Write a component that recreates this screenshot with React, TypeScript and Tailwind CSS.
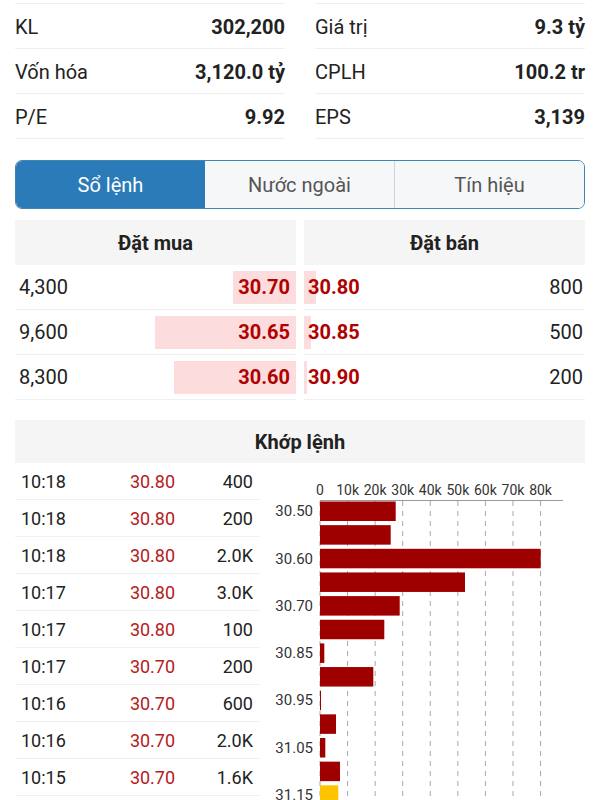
import React from "react";

const info = [
  [["KL", "302,200"], ["Vốn hóa", "3,120.0 tỷ"], ["P/E", "9.92"]],
  [["Giá trị", "9.3 tỷ"], ["CPLH", "100.2 tr"], ["EPS", "3,139"]],
];

const buys = [
  { vol: "4,300", price: "30.70", w: 63 },
  { vol: "9,600", price: "30.65", w: 141 },
  { vol: "8,300", price: "30.60", w: 122 },
];
const sells = [
  { vol: "800", price: "30.80", w: 12 },
  { vol: "500", price: "30.85", w: 7 },
  { vol: "200", price: "30.90", w: 3 },
];

const trades = [
  ["10:18", "30.80", "400"],
  ["10:18", "30.80", "200"],
  ["10:18", "30.80", "2.0K"],
  ["10:17", "30.80", "3.0K"],
  ["10:17", "30.80", "100"],
  ["10:17", "30.70", "200"],
  ["10:16", "30.70", "600"],
  ["10:16", "30.70", "2.0K"],
  ["10:15", "30.70", "1.6K"],
];

const bars = [75.7, 70.7, 220.7, 145, 79.7, 64.3, 4.3, 53.3, 1, 16, 5.3, 20, 18.3, 10];
const yLabels: Record<number, string> = {
  0: "30.50",
  2: "30.60",
  4: "30.70",
  6: "30.85",
  8: "30.95",
  10: "31.05",
  12: "31.15",
};
const xTicks = ["0", "10k", "20k", "30k", "40k", "50k", "60k", "70k", "80k"];

function Chart() {
  const x0 = 60;
  const step = 27.57;
  return (
    <svg width="325" height="337" viewBox="0 0 325 337" className="block" style={{ fontFamily: "Roboto, sans-serif" }}>
      {xTicks.map((t, k) => (
        <line
          key={"g" + k}
          x1={x0 + k * step}
          x2={x0 + k * step}
          y1={38}
          y2={337}
          stroke="#a8a8a8"
          strokeWidth="1"
          strokeDasharray="5 5"
        />
      ))}
      <line x1={x0} x2={303} y1={37.5} y2={37.5} stroke="#9a9a9a" strokeWidth="1" />
      {xTicks.map((t, k) => (
        <text key={"t" + k} x={x0 + k * step} y={32} fontSize="14" fill="#333" textAnchor="middle">
          {t}
        </text>
      ))}
      {bars.map((w, i) => (
        <rect
          key={"b" + i}
          x={x0}
          y={38.5 + i * 23.65}
          width={w}
          height={19.5}
          fill={i === 12 ? "#ffc400" : "#9e0000"}
        />
      ))}
      {Object.entries(yLabels).map(([i, l]) => (
        <text
          key={"y" + i}
          x={53}
          y={38.5 + Number(i) * 23.65 + 9.75}
          fontSize="15"
          fill="#333"
          textAnchor="end"
          dominantBaseline="central"
        >
          {l}
        </text>
      ))}
    </svg>
  );
}

export default function App() {
  return (
    <div
      className="w-[600px] h-[800px] overflow-hidden bg-white text-[#222]"
      style={{ fontFamily: "Roboto, 'Noto Sans', sans-serif" }}
    >
      {/* Info grid */}
      <div className="px-[15px] pt-[3px] grid grid-cols-2 gap-x-[30px]">
        {info.map((col, ci) => (
          <div key={ci} className="flex flex-col border-t border-[#efefef]">
            {col.map(([l, v]) => (
              <div key={l} className="h-[45px] flex items-center justify-between border-b border-[#efefef] text-[20px] pt-[1px]">
                <span className="text-[#222]">{l}</span>
                <span className="font-bold text-[#222]">{v}</span>
              </div>
            ))}
          </div>
        ))}
      </div>

      {/* Tabs */}
      <div className="mx-[15px] mt-[21px] h-[49px] flex border-[1.5px] border-[#3f86b3] rounded-[7px] overflow-hidden text-[20px]">
        <div className="flex-1 flex items-center justify-center bg-[#2b7bb9] text-white">Sổ lệnh</div>
        <div className="flex-1 flex items-center justify-center bg-[#f6f7f9] text-[#555]">Nước ngoài</div>
        <div className="flex-1 flex items-center justify-center bg-[#f6f7f9] text-[#555] border-l border-[#cfd3d6]">
          Tín hiệu
        </div>
      </div>

      {/* Order book */}
      <div className="mx-[15px] mt-[11px] flex gap-2 text-[20px]">
        <div className="flex-1 flex flex-col">
          <div className="h-[45px] bg-[#f5f5f5] flex items-center justify-center font-bold">Đặt mua</div>
          {buys.map((b) => (
            <div key={b.price} className="relative h-[45px] flex items-center justify-between border-b border-[#f0f0f0]">
              <div className="absolute right-0 top-[6px] h-[33px] bg-[#fcdcdc]" style={{ width: b.w }} />
              <span className="relative pl-[4px] text-[#222]">{b.vol}</span>
              <span className="relative pr-[6px] font-bold text-[#b00000]">{b.price}</span>
            </div>
          ))}
        </div>
        <div className="flex-1 flex flex-col">
          <div className="h-[45px] bg-[#f5f5f5] flex items-center justify-center font-bold">Đặt bán</div>
          {sells.map((s) => (
            <div key={s.price} className="relative h-[45px] flex items-center justify-between border-b border-[#f0f0f0]">
              <div className="absolute left-0 top-[6px] h-[33px] bg-[#fcdcdc]" style={{ width: s.w }} />
              <span className="relative pl-[4px] font-bold text-[#b00000]">{s.price}</span>
              <span className="relative pr-[2px] text-[#222]">{s.vol}</span>
            </div>
          ))}
        </div>
      </div>

      {/* Matched orders */}
      <div className="mx-[15px] mt-[20px]">
        <div className="h-[43px] bg-[#f5f5f5] flex items-center justify-center font-bold text-[20px]">Khớp lệnh</div>
        <div className="flex">
          <div className="w-[245px] flex flex-col text-[18px]">
            {trades.map(([t, p, v], i) => (
              <div key={i} className="h-[37px] grid grid-cols-[95px_85px_1fr] items-center border-b border-[#f0f0f0]">
                <span className="pl-[6px] text-[#222]">{t}</span>
                <span className="text-center text-[#b52020]">{p}</span>
                <span className="text-right pr-[7px] text-[#222]">{v}</span>
              </div>
            ))}
          </div>
          <Chart />
        </div>
      </div>
    </div>
  );
}
